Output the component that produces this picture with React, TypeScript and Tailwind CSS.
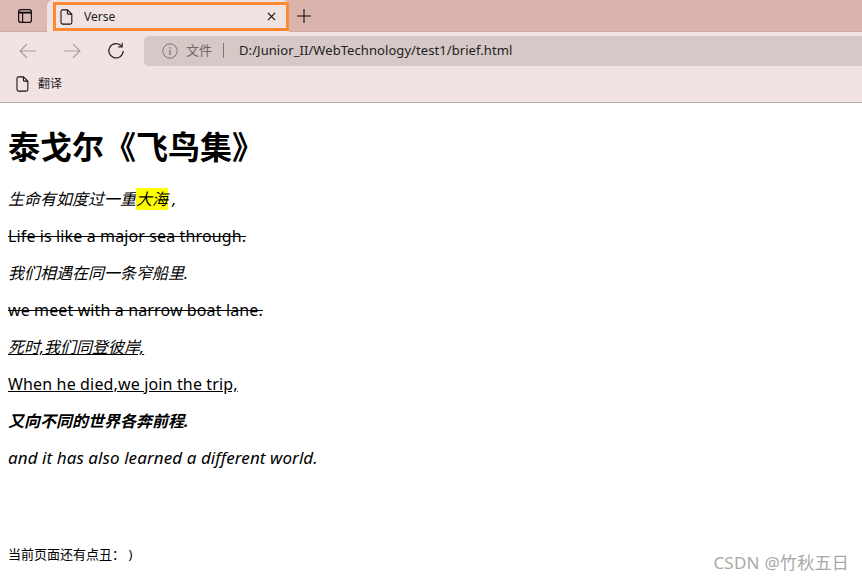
const font = "font-['Noto_Sans','Noto_Sans_CJK_SC',sans-serif]";

function PageIcon({ className }: { className: string }) {
  return (
    <svg viewBox="0 0 14 18" fill="none" stroke="currentColor" strokeWidth="1.2" className={className}>
      <path d="M2.6 1h5.6L13 5.8V15.2a1.8 1.8 0 0 1-1.8 1.8H2.6A1.8 1.8 0 0 1 .8 15.2V2.8A1.8 1.8 0 0 1 2.6 1Z" strokeLinejoin="round" />
      <path d="M8 1v3.4A1.4 1.4 0 0 0 9.4 5.8H13" />
    </svg>
  );
}

function TabStrip() {
  return (
    <div className="flex h-8 bg-[#d9b3ac] border-b border-[#cfa9a2]">
      <div className="flex w-[47px] shrink-0 items-center justify-center rounded-br-[4px] bg-[#dcb9b3] pl-[2px]">
        <svg viewBox="0 0 14 14" fill="none" stroke="#111" strokeWidth="1.2" className="h-[14px] w-[14px]">
          <rect x="0.6" y="0.6" width="12.8" height="12.8" rx="2.2" />
          <path d="M0.6 3.6h12.8" strokeWidth="2" />
          <path d="M4.6 3.6v9.8" />
        </svg>
      </div>
      <div className="relative h-8 w-[242px] shrink-0 rounded-t-[6px] bg-[#f1e3e2]">
        <div className="absolute left-[6px] top-[2px] flex h-[29px] w-[236px] items-center border-[3px] border-[#ff8a33] pl-[4px]">
          <PageIcon className="h-[16px] w-[13px] text-[#111]" />
          <span className={`${font} ml-[11px] flex-1 text-[12px] text-[#222]`}>Verse</span>
          <svg viewBox="0 0 10 10" stroke="#111" strokeWidth="1.3" className="mr-[10px] h-[9px] w-[9px]">
            <path d="M1 1l8 8M9 1l-8 8" />
          </svg>
        </div>
      </div>
      <div className="ml-[8px] flex items-center">
        <svg viewBox="0 0 14 14" stroke="#111" strokeWidth="1.1" className="h-[14px] w-[14px]">
          <path d="M7 0v14M0 7h14" />
        </svg>
      </div>
    </div>
  );
}

function Toolbar() {
  return (
    <div className="flex h-[36px] items-center bg-[#f1e3e2] pt-[1px]">
      <svg viewBox="0 0 18 16" fill="none" stroke="#a59c9b" strokeWidth="1.1" className="ml-[19px] h-[16px] w-[18px]">
        <path d="M17 8H1M8 1 1 8l7 7" />
      </svg>
      <svg viewBox="0 0 18 16" fill="none" stroke="#a59c9b" strokeWidth="1.1" className="ml-[26px] h-[16px] w-[18px]">
        <path d="M1 8h16M10 1l7 7-7 7" />
      </svg>
      <svg viewBox="0 0 18 18" fill="none" stroke="#222" strokeWidth="1.2" className="ml-[26px] h-[18px] w-[18px]">
        <path d="M14.6 4.2A7.2 7.2 0 1 0 16.2 9" />
        <path d="M15.2 0.8v4h-4" />
      </svg>
      <div className="ml-[19px] flex h-[30px] flex-1 items-center rounded-l-[5px] bg-[#d5c8c6] pl-[18px]">
        <svg viewBox="0 0 16 16" fill="none" stroke="#7e7675" strokeWidth="1" className="h-[16px] w-[16px]">
          <circle cx="8" cy="8" r="7.2" />
          <path d="M8 7v5M8 4v1.4" strokeWidth="1.3" />
        </svg>
        <span className={`${font} ml-[8px] text-[13px] text-[#6f6766]`}>文件</span>
        <span className="ml-[11px] h-[15px] w-px bg-[#7e7675]" />
        <span className={`${font} ml-[15px] text-[13px] tracking-[0.07px] text-[#222]`}>D:/Junior_II/WebTechnology/test1/brief.html</span>
      </div>
    </div>
  );
}

function BookmarkBar() {
  return (
    <div className="flex h-[35px] items-center border-b border-[#b5aeae] bg-[#f1e3e2] pl-[16px] pb-[2px]">
      <PageIcon className="h-[16px] w-[13px] text-[#111]" />
      <span className={`${font} ml-[9px] text-[12px] text-[#222]`}>翻译</span>
    </div>
  );
}

export default function App() {
  return (
    <div className="relative h-[582px] w-[862px] overflow-hidden bg-white">
      <TabStrip />
      <Toolbar />
      <BookmarkBar />
      <div className={`${font} px-2 text-black`}>
        <h1 className="mt-[23px] mb-[21px] text-[32px] leading-[42px] font-bold">泰戈尔《飞鸟集》</h1>
        <div className="flex flex-col gap-4 text-[16px] leading-[21px]">
          <p className="italic">
            生命有如度过一重<span className="bg-[#ffff00]">大海</span> ,
          </p>
          <p className="tracking-[0.12px] line-through">Life is like a major sea through.</p>
          <p className="italic">我们相遇在同一条窄船里.</p>
          <p className="tracking-[0.12px] line-through">we meet with a narrow boat lane.</p>
          <p className="italic underline">死时,我们同登彼岸,</p>
          <p className="tracking-[0.15px] underline">When he died,we join the trip,</p>
          <p className="font-bold italic">又向不同的世界各奔前程.</p>
          <p className="text-[17px] leading-[20px] tracking-[0.08px] italic">and it has also learned a different world.</p>
        </div>
        <p className="mt-[77px] text-[13px] leading-[18px] [text-spacing-trim:space-all]">当前页面还有点丑： )</p>
      </div>
      <span className={`${font} absolute right-[13px] top-[552px] text-[17px] leading-[22px] tracking-[0.25px] text-[#a8a8a8]`}>CSDN @竹秋五日</span>
    </div>
  );
}
